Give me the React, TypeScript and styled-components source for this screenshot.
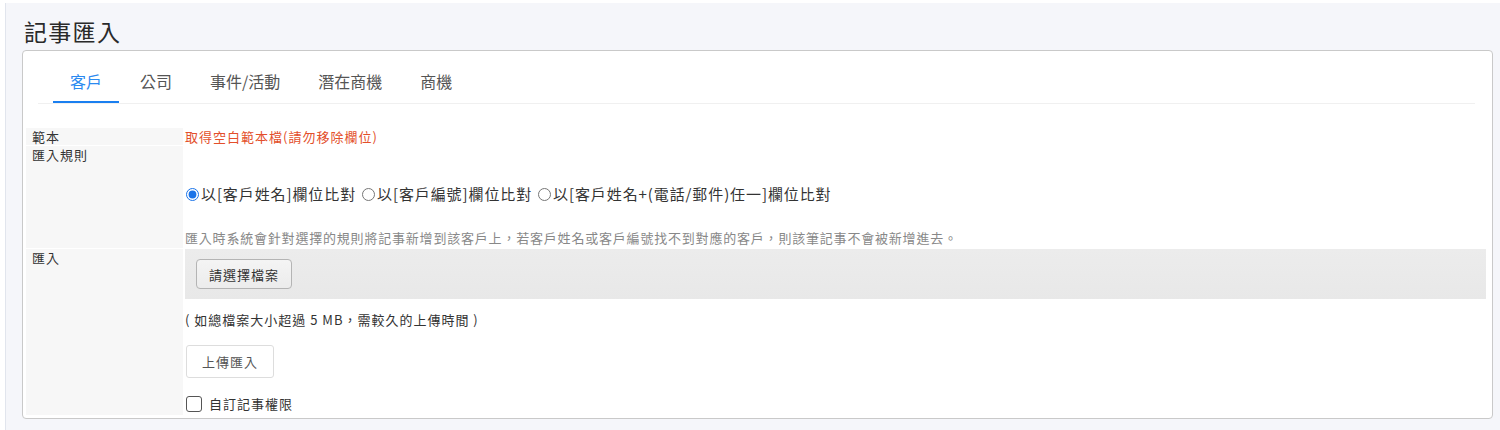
import React, { useState } from 'react'
import styled, { createGlobalStyle } from 'styled-components'

const GlobalStyle = createGlobalStyle`
    body {
        margin: 0;
        background: #fff;
        font-family: "Noto Sans CJK TC", "Noto Sans", sans-serif;
        font-size: 13px;
        letter-spacing: 1px;
        color: #333;
    }
`

const Page = styled.div`
    margin: 3px 0 0 5px;
    height: 427px;
    box-sizing: border-box;
    border-left: 1px solid #e1e5ed;
    background: #f5f6fa;
    padding: 12px 7px 0 16px;
`

const Title = styled.h1`
    margin: 0 0 3px;
    padding-left: 2px;
    font-size: 23px;
    line-height: 32px;
    font-weight: 400;
    letter-spacing: 1.3px;
    color: #2a2a2a;
`

const Card = styled.div`
    background: #fff;
    border: 1px solid #c9c9c9;
    border-radius: 4px;
    padding: 0 6px 3px 3px;
`

const TabBar = styled.div`
    display: flex;
    gap: 4px;
    margin: 0 11px 0 12px;
    padding: 18px 0 0 15px;
    border-bottom: 1px solid #f0f0f0;
`

const Tab = styled.div<{ $active?: boolean }>`
    padding: 0 17px 8px;
    line-height: 24px;
    font-size: 16px;
    letter-spacing: 0;
    color: ${p => (p.$active ? '#2b8af0' : '#555')};
    border-bottom: 2px solid ${p => (p.$active ? '#1a7ff0' : 'transparent')};
    cursor: pointer;
`

const Table = styled.div`
    display: grid;
    grid-template-columns: 157px 1fr;
    column-gap: 2px;
    row-gap: 1px;
    margin-top: 24px;
`

const Label = styled.div`
    background: #f7f7f7;
    padding-left: 6px;
    line-height: 17px;
`

const Value = styled.div`
    line-height: 17px;
`

const RedLink = styled.a`
    color: #e34f2b;
    text-decoration: none;
    cursor: pointer;
`

const RuleBox = styled.div`
    padding-top: 36px;
`

const RadioRow = styled.div`
    display: flex;
    align-items: center;
    line-height: 24px;
    font-size: 15px;
    letter-spacing: 0.9px;
    color: #333;
`

const RadioItem = styled.label`
    display: inline-flex;
    align-items: center;
    margin-right: 5px;
    cursor: pointer;
`

const Radio = styled.input`
    width: 13px;
    height: 13px;
    margin: 0 2px 0 1px;
    accent-color: #1a73e8;
`

const Hint = styled.div`
    margin-top: 22px;
    line-height: 20px;
    font-size: 13px;
    letter-spacing: 0.8px;
    color: #888;
`

const FileArea = styled.div`
    background: linear-gradient(#ececec, #e8e8e8);
    padding: 10px 11px;
`

const FileButton = styled.button`
    height: 30px;
    padding: 0 12px;
    font: inherit;
    letter-spacing: 1px;
    color: #333;
    background: linear-gradient(#f4f4f4, #ececec);
    border: 1px solid #b4b4b4;
    border-radius: 4px;
`

const Note = styled.div`
    margin-top: 11px;
    line-height: 20px;
`

const UploadButton = styled.button`
    display: block;
    margin: 15px 0 0 1px;
    width: 88px;
    height: 33px;
    font: inherit;
    letter-spacing: 1px;
    color: #555;
    background: #fff;
    border: 1px solid #ddd;
    border-radius: 3px;
`

const CheckRow = styled.label`
    display: flex;
    align-items: center;
    gap: 7px;
    margin: 16px 0 1px 1px;
    line-height: 20px;
`

const Check = styled.input`
    appearance: none;
    margin: 0;
    width: 16px;
    height: 16px;
    border: 1px solid #555;
    border-radius: 3px;
    background: #fff;
    &:checked {
        background: #1a73e8;
        border-color: #1a73e8;
    }
`

const tabs = ['客戶', '公司', '事件/活動', '潛在商機', '商機']
const rules = ['以[客戶姓名]欄位比對', '以[客戶編號]欄位比對', '以[客戶姓名+(電話/郵件)任一]欄位比對']

export default function App() {
    const [tab, setTab] = useState(0)
    const [rule, setRule] = useState(0)
    return (
        <>
            <GlobalStyle />
            <Page>
                <Title>記事匯入</Title>
                <Card>
                    <TabBar>
                        {tabs.map((t, i) => (
                            <Tab key={t} $active={i === tab} onClick={() => setTab(i)}>{t}</Tab>
                        ))}
                    </TabBar>
                    <Table>
                        <Label>範本</Label>
                        <Value><RedLink>取得空白範本檔(請勿移除欄位)</RedLink></Value>

                        <Label>匯入規則</Label>
                        <RuleBox>
                            <RadioRow>
                                {rules.map((r, i) => (
                                    <RadioItem key={r}>
                                        <Radio type="radio" name="rule" checked={rule === i} onChange={() => setRule(i)} />
                                        {r}
                                    </RadioItem>
                                ))}
                            </RadioRow>
                            <Hint>匯入時系統會針對選擇的規則將記事新增到該客戶上，若客戶姓名或客戶編號找不到對應的客戶，則該筆記事不會被新增進去。</Hint>
                        </RuleBox>

                        <Label>匯入</Label>
                        <div>
                            <FileArea>
                                <FileButton>請選擇檔案</FileButton>
                            </FileArea>
                            <Note>( 如總檔案大小超過 5 MB，需較久的上傳時間 )</Note>
                            <UploadButton>上傳匯入</UploadButton>
                            <CheckRow>
                                <Check type="checkbox" />
                                自訂記事權限
                            </CheckRow>
                        </div>
                    </Table>
                </Card>
            </Page>
        </>
    )
}
